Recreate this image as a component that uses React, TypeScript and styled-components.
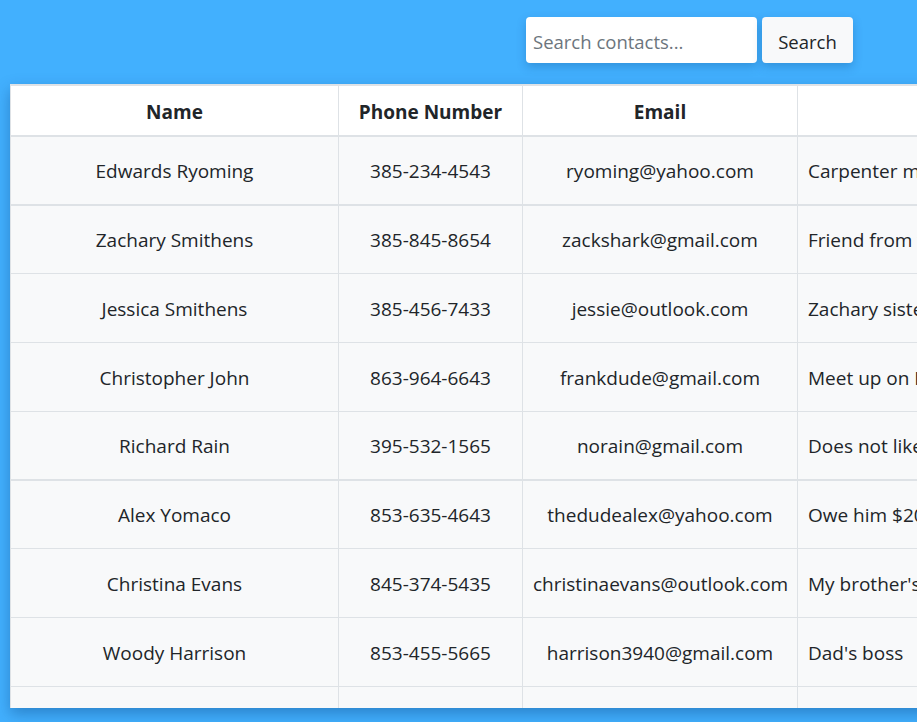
import React from "react";
import styled, { createGlobalStyle } from "styled-components";

const Global = createGlobalStyle`
  html, body { margin: 0; padding: 0; }
  body {
    background: #42b0fe;
    font-family: "Open Sans", "Noto Sans", sans-serif;
    color: #212529;
    overflow: hidden;
  }
`;

const Page = styled.div`
  width: 917px;
  height: 722px;
  overflow: hidden;
`;

const TopBar = styled.div`
  display: flex;
  justify-content: flex-end;
  gap: 5px;
  padding: 17px 64px 21px 0;
`;

const SearchInput = styled.input`
  box-sizing: border-box;
  width: 231px;
  height: 46px;
  border: none;
  border-radius: 4px;
  background: #fff;
  padding: 3px 7px 0;
  font-family: inherit;
  font-size: 18.5px;
  color: #212529;
  box-shadow: 0 4px 10px rgba(0, 60, 120, 0.25);
  outline: none;
  &::placeholder { color: #6c757d; }
`;

const SearchButton = styled.button`
  box-sizing: border-box;
  width: 91px;
  height: 46px;
  border: none;
  border-radius: 4px;
  background: #f8f9fa;
  padding: 3px 0 0;
  font-family: inherit;
  font-size: 18.5px;
  color: #212529;
  box-shadow: 0 4px 10px rgba(0, 60, 120, 0.25);
`;

const TableWrap = styled.div`
  margin-left: 10px;
  width: 1100px;
  height: 624px;
  overflow: hidden;
  background: #f8f9fa;
  box-shadow: 0 6px 14px rgba(0, 50, 110, 0.35);
`;

const Table = styled.table`
  border-collapse: collapse;
  table-layout: fixed;
  width: 1100px;
  font-size: 19px;
`;

const HeadCell = styled.th<{ $w: number }>`
  box-sizing: border-box;
  width: ${(p) => p.$w}px;
  height: 51px;
  background: #fff;
  font-weight: 700;
  text-align: center;
  vertical-align: middle;
  border: 1px solid #dee2e6;
  border-top: 2px solid #dee2e6;
  border-bottom: 2px solid #dee2e6;
  padding: 3px 10px 0;
`;

const Row = styled.tr<{ $thick?: boolean }>`
  background: #f8f9fa;
  border-bottom: ${(p) => (p.$thick ? 2 : 1)}px solid #dee2e6;
`;

const Cell = styled.td<{ $left?: boolean }>`
  box-sizing: border-box;
  height: 68.75px;
  padding: 2px 10px 0;
  text-align: ${(p) => (p.$left ? "left" : "center")};
  vertical-align: middle;
  white-space: nowrap;
  overflow: hidden;
  border-left: 1px solid #dee2e6;
  border-right: 1px solid #dee2e6;
`;

const contacts = [
  ["Edwards Ryoming", "385-234-4543", "ryoming@yahoo.com", "Carpenter man"],
  ["Zachary Smithens", "385-845-8654", "zackshark@gmail.com", "Friend from work"],
  ["Jessica Smithens", "385-456-7433", "jessie@outlook.com", "Zachary sister"],
  ["Christopher John", "863-964-6643", "frankdude@gmail.com", "Meet up on Friday"],
  ["Richard Rain", "395-532-1565", "norain@gmail.com", "Does not like rain"],
  ["Alex Yomaco", "853-635-4643", "thedudealex@yahoo.com", "Owe him $20"],
  ["Christina Evans", "845-374-5435", "christinaevans@outlook.com", "My brother's friend"],
  ["Woody Harrison", "853-455-5665", "harrison3940@gmail.com", "Dad's boss"],
  ["", "", "", ""],
];

export default function App() {
  return (
    <Page>
      <Global />
      <TopBar>
        <SearchInput placeholder="Search contacts..." />
        <SearchButton>Search</SearchButton>
      </TopBar>
      <TableWrap>
        <Table>
          <thead>
            <tr>
              <HeadCell $w={328}>Name</HeadCell>
              <HeadCell $w={184}>Phone Number</HeadCell>
              <HeadCell $w={275}>Email</HeadCell>
              <HeadCell $w={313}>Notes</HeadCell>
            </tr>
          </thead>
          <tbody>
            {contacts.map((c, i) => (
              <Row key={i} $thick={i === 0 || i === 4}>
                <Cell>{c[0]}</Cell>
                <Cell>{c[1]}</Cell>
                <Cell>{c[2]}</Cell>
                <Cell $left>{c[3]}</Cell>
              </Row>
            ))}
          </tbody>
        </Table>
      </TableWrap>
    </Page>
  );
}
